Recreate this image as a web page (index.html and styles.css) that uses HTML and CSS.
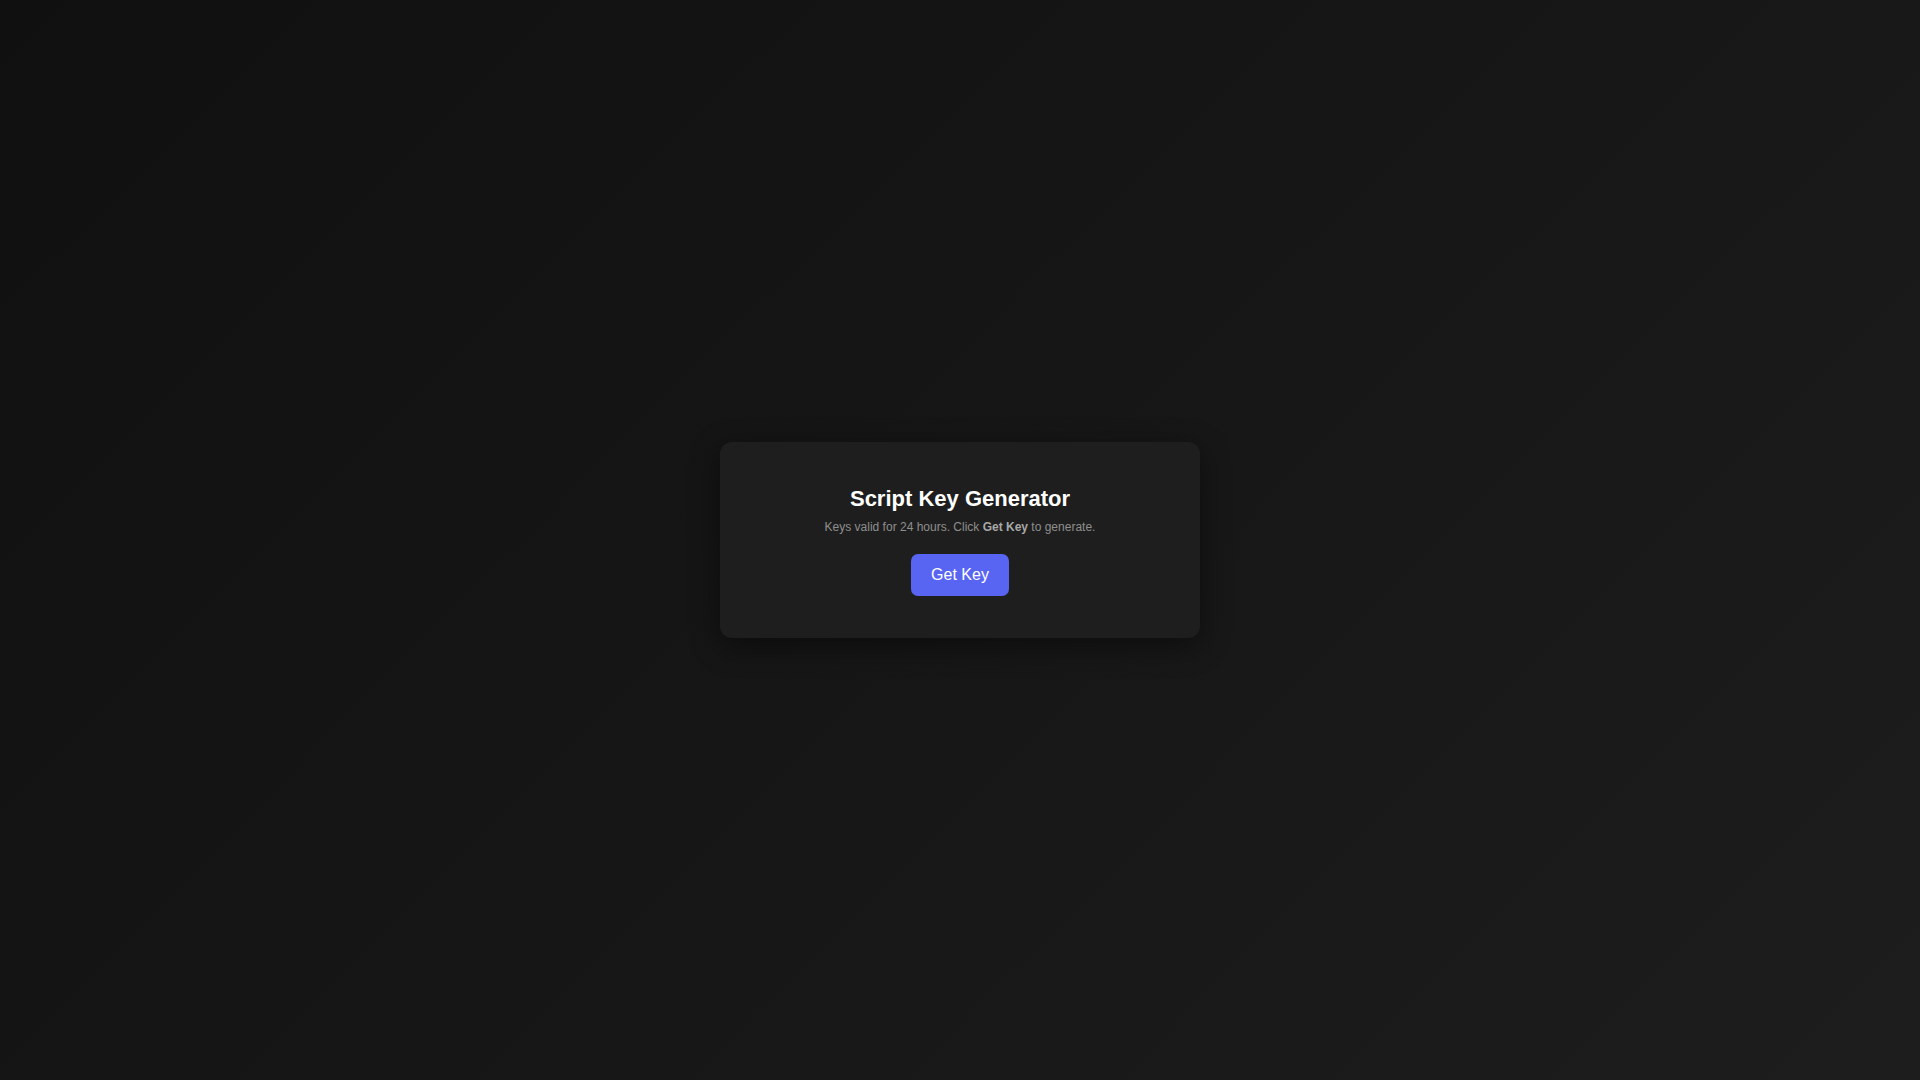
FILE: index.html
```html
<!DOCTYPE html>
<html lang="en">
<head>
<meta charset="utf-8">
<title>Script Key Generator</title>
<link rel="stylesheet" href="styles.css">
</head>
<body>
<main class="card">
  <h1 class="title">Script Key Generator</h1>
  <p class="subtitle">Keys valid for 24 hours. Click <strong>Get Key</strong> to generate.</p>
  <button class="btn" type="button">Get Key</button>
</main>
</body>
</html>
```

FILE: styles.css
```css
html, body {
  margin: 0;
  padding: 0;
  height: 100%;
}
body {
  min-height: 100vh;
  display: flex;
  align-items: center;
  justify-content: center;
  background: linear-gradient(135deg, #101010 0%, #161616 50%, #1d1d1d 100%);
  font-family: "Liberation Sans", Arial, sans-serif;
}
.card {
  width: 480px;
  box-sizing: border-box;
  padding: 44px 40px 42px;
  background: #1e1e1e;
  border-radius: 12px;
  box-shadow: 0 8px 30px rgba(0, 0, 0, 0.45);
  display: flex;
  flex-direction: column;
  align-items: center;
  text-align: center;
}
.title {
  margin: 0 0 9px;
  font-size: 22px;
  line-height: 25px;
  font-weight: 700;
  color: #ffffff;
}
.subtitle {
  margin: 0 0 20px;
  font-size: 12px;
  color: #8e8e8e;
}
.subtitle strong {
  color: #a8a8a8;
  font-weight: 700;
}
.btn {
  border: none;
  background: #5865f2;
  color: #ffffff;
  font-family: "Liberation Sans", Arial, sans-serif;
  font-size: 16px;
  padding: 12px 20px;
  line-height: 18px;
  border-radius: 7px;
  cursor: pointer;
}
```
